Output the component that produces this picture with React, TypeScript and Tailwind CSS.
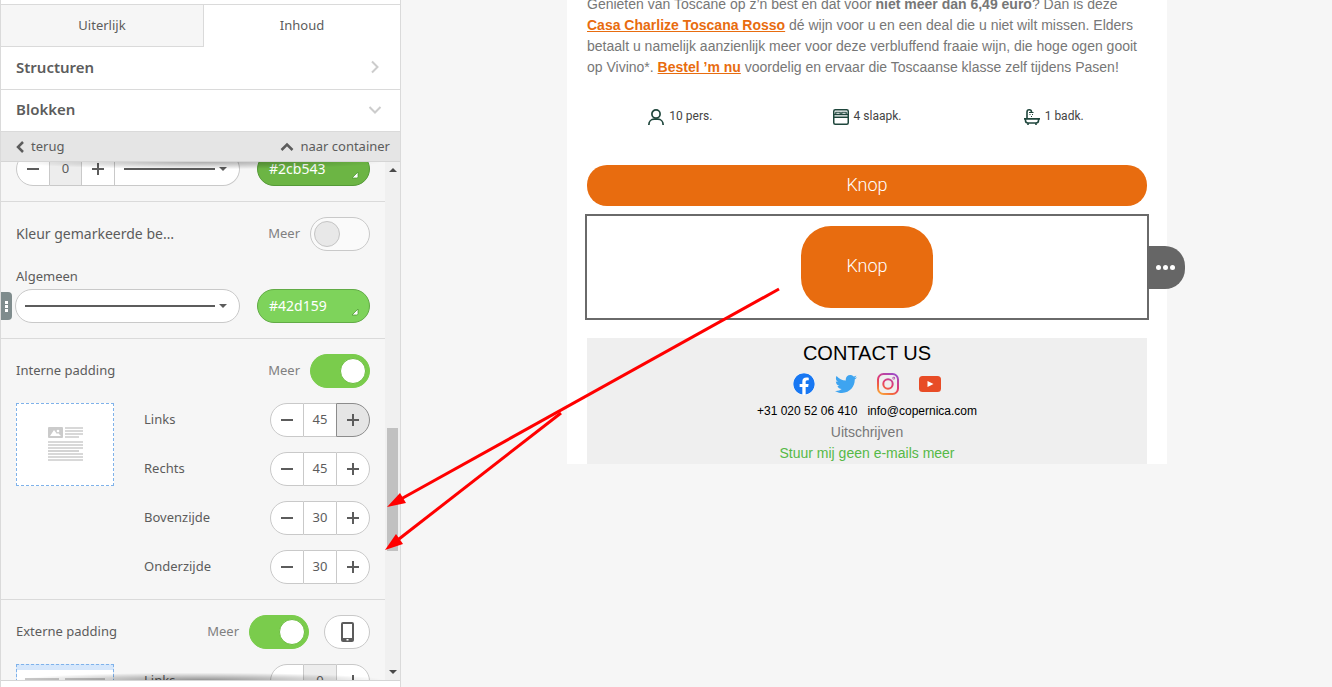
import React, { useId, useState } from "react";
import { FaFacebook, FaTwitter } from "react-icons/fa";

const line = "stroke-[#5c5c5c] fill-none";

function Chevron({ points, className, width = 3 }: { points: string; className: string; width?: number }) {
  return (
    <svg viewBox="0 0 14 14" className={className} fill="none" stroke="currentColor" strokeWidth={width} aria-hidden="true">
      <polyline points={points} />
    </svg>
  );
}

function Minus() {
  return (
    <svg viewBox="0 0 12 12" className={`h-3 w-3 ${line}`} strokeWidth="2" aria-hidden="true">
      <path d="M0 6h12" />
    </svg>
  );
}

function Plus() {
  return (
    <svg viewBox="0 0 12 12" className={`h-3 w-3 ${line}`} strokeWidth="2" aria-hidden="true">
      <path d="M0 6h12M6 0v12" />
    </svg>
  );
}

function StepperCells({ label, id, initial, muted, active }: { label: string; id?: string; initial: number; muted?: boolean; active?: boolean }) {
  const [value, setValue] = useState(String(initial));
  const step = (by: number) => setValue((v) => String(Math.max(0, (Number(v) || 0) + by)));
  return (
    <>
      <button type="button" aria-label={`${label} verlagen`} onClick={() => step(-1)} className="flex w-[34px] items-center justify-center rounded-l-full border border-[#c9c9c9] bg-white">
        <Minus />
      </button>
      <input
        id={id}
        aria-label={id ? undefined : label}
        value={value}
        onChange={(e) => setValue(e.target.value)}
        className={`border-y border-[#c9c9c9] text-center outline-none ${id ? "w-8" : "w-[31px]"} ${muted ? "bg-[#ededed]" : "bg-white"}`}
      />
      <button
        type="button"
        aria-label={`${label} verhogen`}
        onClick={() => step(1)}
        className={`flex w-[34px] items-center justify-center border ${active ? "rounded-r-full border-[#8c8c8c] bg-[#e5e5e5]" : id ? "rounded-r-full border-[#c9c9c9] bg-white" : "border-[#c9c9c9] bg-white"}`}
      >
        <Plus />
      </button>
    </>
  );
}

function StepperRow(props: { label: string; initial: number; muted?: boolean; active?: boolean }) {
  const id = useId();
  return (
    <div className="flex h-[34px] items-center justify-between">
      <label htmlFor={id}>{props.label}</label>
      <div className="flex h-[34px]">
        <StepperCells id={id} {...props} />
      </div>
    </div>
  );
}

function LineSelect({ label, className }: { label: string; className: string }) {
  return (
    <div className={`relative flex ${className}`}>
      <select aria-label={label} className="w-full appearance-none rounded-[inherit] bg-transparent outline-none">
        <option value="solid" />
      </select>
      <span className="pointer-events-none absolute inset-0 flex items-center gap-1 pr-3 pl-[9px]">
        <span className="h-0.5 flex-1 bg-[#5c5c5c]" />
        <svg viewBox="0 0 8 4" className="h-1 w-2 fill-[#5c5c5c]" aria-hidden="true">
          <path d="M0 0h8L4 4z" />
        </svg>
      </span>
    </div>
  );
}

function ColorButton({ value, className }: { value: string; className: string }) {
  return (
    <button type="button" className={`relative h-[34px] w-[113px] rounded-full border pl-[11px] text-left text-sm text-white ${className}`}>
      {value}
      <svg viewBox="0 0 8 8" className="absolute right-[10px] bottom-[6px] h-2 w-2" aria-hidden="true">
        <path d="M7 1v4.500q0 1.500-1.500 1.500H1z" fill="#fff" stroke="#4f9a35" strokeWidth=".8" />
      </svg>
    </button>
  );
}

function Toggle({ initial }: { initial: boolean }) {
  const [on, setOn] = useState(initial);
  return (
    <label className="flex items-center gap-[10px] text-[#808080]">
      Meer
      <span className="relative flex">
        <input
          type="checkbox"
          checked={on}
          onChange={() => setOn(!on)}
          className="h-[34px] w-[60px] appearance-none rounded-full border border-[#c9c9c9] bg-[#fafafa] checked:border-[#7acc4c] checked:bg-[#7acc4c]"
        />
        <span
          className={`pointer-events-none absolute top-1 h-[26px] w-[26px] rounded-full border ${on ? "right-1 border-[#6cbd40] bg-white" : "left-1 border-[#c4c4c4] bg-[#e8e8e8]"}`}
        />
      </span>
    </label>
  );
}

function TextBlockIcon() {
  const rows = [15, 18, 21, 24, 27, 30, 33];
  return (
    <svg viewBox="0 0 35 35" className="h-[35px] w-[35px]" aria-hidden="true">
      <rect width="15" height="11" rx="1" fill="#cbcbcb" />
      <path d="M2 9l4-6 3 4 1-1 3 3z" fill="#fff" />
      <circle cx="10" cy="4" r="1.3" fill="#fff" />
      <path d="M17 1h18M17 4h18M17 7h18M17 10h14" stroke="#cbcbcb" strokeWidth="1.700" />
      {rows.map((y) => (
        <path key={y} d={`M0 ${y}h${y === 24 ? 31 : 35}`} stroke="#cbcbcb" strokeWidth="1.700" />
      ))}
    </svg>
  );
}

function Sidebar() {
  return (
    <aside className="flex w-[401px] shrink-0 flex-col border-x border-[#dadada] bg-white font-['Noto_Sans',sans-serif] text-[13px] text-[#5c5c5c]">
      <div className="mt-1 flex h-[43px] border-t border-[#dadada]" role="tablist">
        <button type="button" role="tab" aria-selected="false" className="w-[203px] border-r border-b border-[#dadada] bg-[#f6f6f6]">
          Uiterlijk
        </button>
        <button type="button" role="tab" aria-selected="true" className="flex-1">
          Inhoud
        </button>
      </div>
      <button type="button" className="flex h-[43px] items-center justify-between border-b border-[#dadada] pr-[18px] pb-0.5 pl-[15px] text-[15px] font-semibold">
        Structuren
        <Chevron points="4,1.500 9.500,7 4,12.500" className="h-[14px] w-[14px] text-[#cccccc]" width={2} />
      </button>
      <button type="button" className="flex h-[42px] items-center justify-between border-b border-[#dadada] pr-[18px] pb-0.5 pl-[15px] text-[15px] font-semibold">
        Blokken
        <Chevron points="1.500,4 7,9.500 12.500,4" className="h-[14px] w-[14px] text-[#cccccc]" width={2} />
      </button>
      <div className="flex h-[30px] shrink-0 items-center justify-between border-b border-[#d5d5d5] bg-[#e5e5e5] pr-[10px] pl-3">
        <button type="button" className="flex items-center gap-1">
          <Chevron points="10,2 5,7 10,12" className="h-[14px] w-[14px]" width={2.5} />
          terug
        </button>
        <button type="button" className="flex items-center gap-1.5">
          <Chevron points="1.500,10 7,4.500 12.500,10" className="h-[14px] w-[14px]" width={2.5} />
          naar container
        </button>
      </div>

      <div className="relative flex min-h-0 flex-1 overflow-hidden bg-[#f6f6f6]">
        <div className="-mt-[10px] flex-1">
          <section className="flex justify-between border-b border-[#dadada] px-[15px] pb-[15px]">
            <div className="flex h-[34px]">
              <StepperCells label="Rand" initial={0} muted />
              <LineSelect label="Randstijl" className="w-[125px] rounded-r-full border-y border-r border-[#c9c9c9] bg-white" />
            </div>
            <ColorButton value="#2cb543" className="border-[#559a37] bg-[#6cb544]" />
          </section>

          <section className="border-b border-[#dadada] p-[15px]">
            <div className="flex items-center justify-between">
              <h3 className="text-sm">Kleur gemarkeerde be…</h3>
              <Toggle initial={false} />
            </div>
            <h3 className="mt-[15px] mb-[3px] leading-5">Algemeen</h3>
            <div className="relative -ml-px flex justify-between">
              <LineSelect label="Algemeen" className="h-[34px] w-[225px] rounded-full border border-[#c9c9c9] bg-white" />
              <ColorButton value="#42d159" className="border-[#62ab46] bg-[#7ed35b]" />
              <span className="absolute top-[3px] -left-[14px] flex h-7 w-[11px] flex-col items-center justify-center gap-px rounded-r-sm bg-[#7f8c8d]">
                <i className="h-[3px] w-[3px] bg-white" />
                <i className="h-[3px] w-[3px] bg-white" />
                <i className="h-[3px] w-[3px] bg-white" />
              </span>
            </div>
          </section>

          <section className="border-b border-[#dadada] p-[15px]">
            <div className="flex items-center justify-between">
              <h3>Interne padding</h3>
              <Toggle initial={true} />
            </div>
            <div className="mt-[15px] flex items-start gap-[30px]">
              <div className="flex h-[83px] w-[98px] items-center justify-center border border-dashed border-[#7fb2ea] bg-white">
                <TextBlockIcon />
              </div>
              <div className="flex flex-1 flex-col gap-[15px]">
                <StepperRow label="Links" initial={45} active />
                <StepperRow label="Rechts" initial={45} />
                <StepperRow label="Bovenzijde" initial={30} />
                <StepperRow label="Onderzijde" initial={30} />
              </div>
            </div>
          </section>

          <section className="p-[15px]">
            <div className="flex items-center justify-between">
              <h3>Externe padding</h3>
              <div className="flex gap-[15px]">
                <Toggle initial={true} />
                <button type="button" aria-label="Mobiel" className="flex h-[34px] w-[46px] items-center justify-center rounded-full border border-[#c9c9c9] bg-white">
                  <svg viewBox="0 0 13 20" className="h-5 w-[13px]" aria-hidden="true">
                    <rect width="13" height="20" rx="2" fill="#5c5c5c" />
                    <rect x="2" y="2" width="9" height="14" fill="#fff" />
                    <rect x="5.500" y="17" width="2" height="1.500" fill="#fff" />
                  </svg>
                </button>
              </div>
            </div>
            <div className="mt-[15px] flex items-start gap-[30px]">
              <div className="h-[83px] w-[98px] border border-dashed border-[#7fb2ea] bg-[#d6e7fb] pt-[5px]">
                <div className="flex h-[70px] gap-1.5 bg-white px-2 pt-2">
                  <div className="h-8 w-[34px] bg-[#cbcbcb]" />
                  <div className="h-8 flex-1 bg-[#cbcbcb]" />
                </div>
              </div>
              <div className="flex-1">
                <StepperRow label="Links" initial={0} muted />
              </div>
            </div>
          </section>
        </div>

        <div className="flex w-[15px] flex-col items-center justify-between bg-[#f0f0f0] pt-1.5 pb-1.5" aria-hidden="true">
          <svg viewBox="0 0 8 4" className="h-1 w-2 fill-[#4a4a4a]"><path d="M0 4h8L4 0z" /></svg>
          <span className="mt-[136px] h-[123px] w-[11px] bg-[#c1c1c1]" />
          <svg viewBox="0 0 8 4" className="h-1 w-2 fill-[#4a4a4a]"><path d="M0 0h8L4 4z" /></svg>
        </div>
        <div className="pointer-events-none absolute inset-x-0 top-0 h-2 bg-[radial-gradient(ellipse_at_top,rgba(0,0,0,0.32),transparent_65%)]" />
        <div className="pointer-events-none absolute inset-x-0 bottom-0 h-2 bg-[radial-gradient(ellipse_at_bottom,rgba(0,0,0,0.4),transparent_65%)]" />
      </div>
      <div className="h-[7px] shrink-0 border-t border-[#d5d5d5] bg-white" />
    </aside>
  );
}

function PersonIcon() {
  return (
    <svg viewBox="0 0 16 16" className="h-4 w-4" fill="none" stroke="#1f463c" strokeWidth="1.700" aria-hidden="true">
      <circle cx="8" cy="5" r="4.100" />
      <path d="M.9 16v-.5c0-3 2.300-5.300 5.200-5.300h3.800c2.900 0 5.200 2.300 5.200 5.300v.5" />
    </svg>
  );
}

function BedIcon() {
  return (
    <svg viewBox="0 0 16 16" className="h-4 w-4" fill="none" stroke="#1f463c" strokeWidth="1.500" aria-hidden="true">
      <rect x=".75" y=".75" width="14.500" height="14.500" rx="1.500" />
      <path d="M.6 5.500h14.800M.6 8.200h14.800" />
      <path d="M2.800 5.500v-2.300h4.400v2.300M8.800 5.500v-2.300h4.400v2.300" strokeWidth="1.100" />
    </svg>
  );
}

function BathIcon() {
  return (
    <svg viewBox="0 0 16 16" className="h-4 w-4" fill="none" stroke="#1f463c" strokeWidth="1.600" aria-hidden="true">
      <path d="M0 9.900h16M1.500 10v1.500c0 1.500 1 2.500 2.500 2.500h8c1.500 0 2.500-1 2.500-2.500V10M4 14v2M12 14v2M3 9.500V3c0-1.500.8-2.200 2.200-2.200S7.500 1.500 7.500 3" />
      <path d="M5 3.500h4.500M5.500 5.500h1M8 5.500h1M7 7.500h1" strokeWidth="1.200" />
    </svg>
  );
}

function InstagramMark() {
  return (
    <svg viewBox="0 0 22 22" className="h-[22px] w-[22px]" fill="none" stroke="url(#insta)" strokeWidth="2" aria-hidden="true">
      <defs>
        <linearGradient id="insta" gradientUnits="userSpaceOnUse" x1="3" y1="22" x2="15" y2="0">
          <stop offset="0" stopColor="#fbb03b" />
          <stop offset=".3" stopColor="#f2643e" />
          <stop offset=".55" stopColor="#e23b70" />
          <stop offset="1" stopColor="#a04bc4" />
        </linearGradient>
      </defs>
      <rect x="1" y="1" width="20" height="20" rx="5.500" />
      <circle cx="11" cy="11" r="4.700" />
      <circle cx="16.800" cy="5.200" r=".4" />
    </svg>
  );
}

function YoutubeMark() {
  return (
    <svg viewBox="0 0 22 22" className="h-[22px] w-[22px]" aria-hidden="true">
      <rect y="3" width="22" height="16" rx="3.500" fill="#e84c26" />
      <path d="M8.500 8v6l6-3z" fill="#fff" />
    </svg>
  );
}

function Email() {
  const facts = [
    { icon: <PersonIcon />, text: "10 pers." },
    { icon: <BedIcon />, text: "4 slaapk." },
    { icon: <BathIcon />, text: "1 badk." },
  ];
  const accent = "font-bold text-[#e86c0f] underline";
  return (
    <main className="flex min-w-0 flex-1 items-start justify-center overflow-hidden bg-[#f6f6f6] pl-px font-['Liberation_Sans',Arial,sans-serif]">
      <article className="w-full max-w-[600px] bg-white px-5">
        <p className="-mt-1.5 text-sm leading-[21px] text-[#777777]">
          Genieten van Toscane op z’n best en dat voor <b>niet meer dan 6,49 euro</b>? Dan is deze <a href="#rosso" className={accent}>Casa Charlize Toscana Rosso</a> dé wijn voor u en een deal die u niet wilt missen. Elders betaalt u namelijk aanzienlijk meer voor deze verbluffend fraaie wijn, die hoge ogen gooit op Vivino*. <a href="#bestel" className={accent}>Bestel ’m nu</a> voordelig en ervaar die Toscaanse klasse zelf tijdens Pasen!
        </p>
        <ul className="mt-[27px] grid grid-cols-3 font-['Roboto',sans-serif] text-[12px] text-[#444444]">
          {facts.map((f) => (
            <li key={f.text} className="flex h-6 items-center justify-center gap-[5px]">
              {f.icon}
              <span className="pb-0.5">{f.text}</span>
            </li>
          ))}
        </ul>
        <a href="#knop" className="mt-9 flex h-[41px] items-center justify-center rounded-[20px] bg-[#e86c0f] pb-0.5 font-['Roboto',sans-serif] text-lg font-light text-white">
          Knop
        </a>
        <div className="relative -mx-0.5 mt-2 flex justify-center border-2 border-[#6a6a6a] py-[10px]">
          <a href="#knop" className="rounded-[30px] bg-[#e86c0f] px-[45px] pt-[29px] pb-[31px] font-['Roboto',sans-serif] text-lg leading-[22px] font-light text-white">
            Knop
          </a>
          <button type="button" aria-label="Meer opties" className="absolute top-[30px] left-full flex h-[43px] w-[38px] items-center justify-center gap-0.5 rounded-r-[20px] bg-[#666666] pr-0.5">
            <i className="h-[5px] w-[5px] rounded-full bg-white" />
            <i className="h-[5px] w-[5px] rounded-full bg-white" />
            <i className="h-[5px] w-[5px] rounded-full bg-white" />
          </button>
        </div>
        <footer className="mt-[18px] bg-[#efefef] text-center text-sm leading-[21px] text-[#777777]">
          <h2 className="text-xl leading-[30px] text-black">CONTACT US</h2>
          <div className="flex h-8 items-center justify-center gap-5">
            <a href="#facebook" aria-label="Facebook"><FaFacebook className="h-[22px] w-[22px] rounded-full bg-white text-[#1877f2]" /></a>
            <a href="#twitter" aria-label="Twitter"><FaTwitter className="h-[22px] w-[22px] text-[#3ea4f0]" /></a>
            <a href="#instagram" aria-label="Instagram"><InstagramMark /></a>
            <a href="#youtube" aria-label="YouTube"><YoutubeMark /></a>
          </div>
          <div className="flex h-[22px] items-center justify-center gap-[10px] text-xs text-black">
            <a href="tel:+31205206410">+31 020 52 06 410</a>
            <a href="mailto:info@copernica.com">info@copernica.com</a>
          </div>
          <p><a href="#uitschrijven">Uitschrijven</a></p>
          <p><a href="#stop" className="text-[#56b947]">Stuur mij geen e-mails meer</a></p>
        </footer>
      </article>
    </main>
  );
}

export default function App() {
  return (
    <div className="relative flex h-screen overflow-hidden bg-[#f6f6f6]">
      <Sidebar />
      <Email />
      <svg viewBox="0 0 400 270" className="pointer-events-none absolute top-[285px] left-[383px] h-[270px] w-[400px]" fill="#ff0000" stroke="#ff0000" aria-hidden="true">
        <path d="M396 4L18 214" strokeWidth="3" />
        <path d="M4 222L17 208L23 218z" stroke="none" />
        <path d="M178 128L16 254" strokeWidth="3" />
        <path d="M2 265L13 249L20 259z" stroke="none" />
      </svg>
    </div>
  );
}
